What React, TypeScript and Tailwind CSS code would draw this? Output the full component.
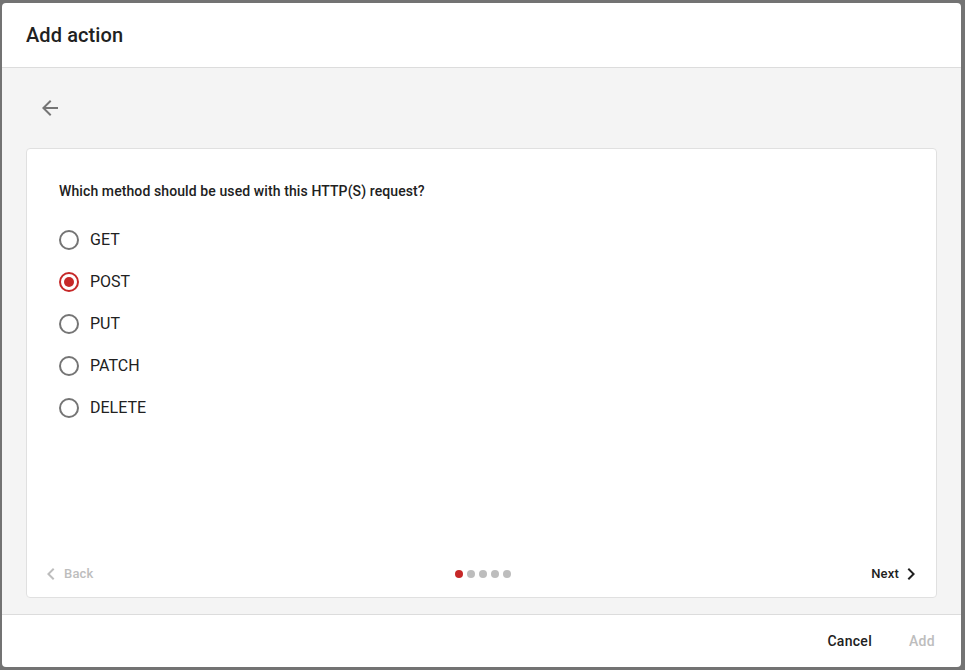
import React, { useState } from 'react';

const methods = ['GET', 'POST', 'PUT', 'PATCH', 'DELETE'];

export default function App() {
  const [method, setMethod] = useState('POST');

  return (
    <div
      className="w-[965px] h-[670px] bg-[#737373] pt-[3px] pl-[2px] overflow-hidden"
      style={{ fontFamily: 'Roboto, "Liberation Sans", sans-serif' }}
    >
      <div className="w-[959px] h-[664px] bg-white rounded-[4px] flex flex-col overflow-hidden">
        {/* header */}
        <div className="h-[65px] shrink-0 border-b border-[#dcdcdc] flex items-center px-6">
          <h2 className="text-[20px] font-medium text-[#212121] leading-none -mt-[1px] tracking-[0.1px]">Add action</h2>
        </div>

        {/* content */}
        <div className="flex-1 bg-[#f4f4f4] px-6 pt-4 pb-4 flex flex-col">
          <button className="w-12 h-12 flex items-center justify-center text-[#757575] shrink-0">
            <svg width="24" height="24" viewBox="0 0 24 24" fill="currentColor">
              <path d="M20 11H7.83l5.59-5.59L12 4l-8 8 8 8 1.41-1.41L7.83 13H20v-2z" />
            </svg>
          </button>

          <div className="mt-4 flex-1 bg-white border border-[#e0e0e0] rounded-[4px] flex flex-col">
            <div className="flex-1 pt-[32px] px-8">
              <p className="text-[14px] font-medium text-[#212121] leading-5 tracking-[0.1px]">
                Which method should be used with this HTTP(S) request?
              </p>
              <div className="mt-[18px] flex flex-col">
                {methods.map((m) => {
                  const active = m === method;
                  return (
                    <label
                      key={m}
                      onClick={() => setMethod(m)}
                      className="h-[42px] flex items-center cursor-pointer"
                    >
                      <span
                        className={
                          active
                            ? 'w-5 h-5 rounded-full border-2 border-[#c62828] flex items-center justify-center'
                            : 'w-5 h-5 rounded-full border-2 border-[#757575] flex items-center justify-center'
                        }
                      >
                        {active && <span className="w-[10px] h-[10px] rounded-full bg-[#c62828]" />}
                      </span>
                      <span className="ml-[11px] text-[16px] text-[#212121]">{m}</span>
                    </label>
                  );
                })}
              </div>
            </div>

            <div className="h-[48px] shrink-0 grid grid-cols-[1fr_auto_1fr] items-center pl-3 pr-[13px] pt-[2px]">
              <button className="justify-self-start flex items-center text-[13px] font-medium text-[#bdbdbd] tracking-[0.2px]">
                <svg width="24" height="24" viewBox="0 0 24 24" fill="currentColor">
                  <path d="M15.41 7.41L14 6l-6 6 6 6 1.41-1.41L10.83 12z" />
                </svg>
                <span className="ml-[1px]">Back</span>
              </button>
              <div className="flex items-center gap-1 translate-x-[2px]">
                <span className="w-2 h-2 rounded-full bg-[#c62828]" />
                <span className="w-2 h-2 rounded-full bg-[#bdbdbd]" />
                <span className="w-2 h-2 rounded-full bg-[#bdbdbd]" />
                <span className="w-2 h-2 rounded-full bg-[#bdbdbd]" />
                <span className="w-2 h-2 rounded-full bg-[#bdbdbd]" />
              </div>
              <button className="justify-self-end flex items-center text-[13px] font-medium text-[#212121] tracking-[0.2px]">
                Next
                <svg width="24" height="24" viewBox="0 0 24 24" fill="currentColor">
                  <path d="M10 6L8.59 7.41 13.17 12l-4.58 4.59L10 18l6-6z" />
                </svg>
              </button>
            </div>
          </div>
        </div>

        {/* footer */}
        <div className="h-[53px] shrink-0 border-t border-[#dcdcdc] flex items-center justify-end pr-[26px] gap-[37px]">
          <button className="text-[14px] font-medium text-[#212121] tracking-[0.3px]">Cancel</button>
          <button className="text-[14px] font-medium text-[#bdbdbd] tracking-[0.3px]">Add</button>
        </div>
      </div>
    </div>
  );
}
